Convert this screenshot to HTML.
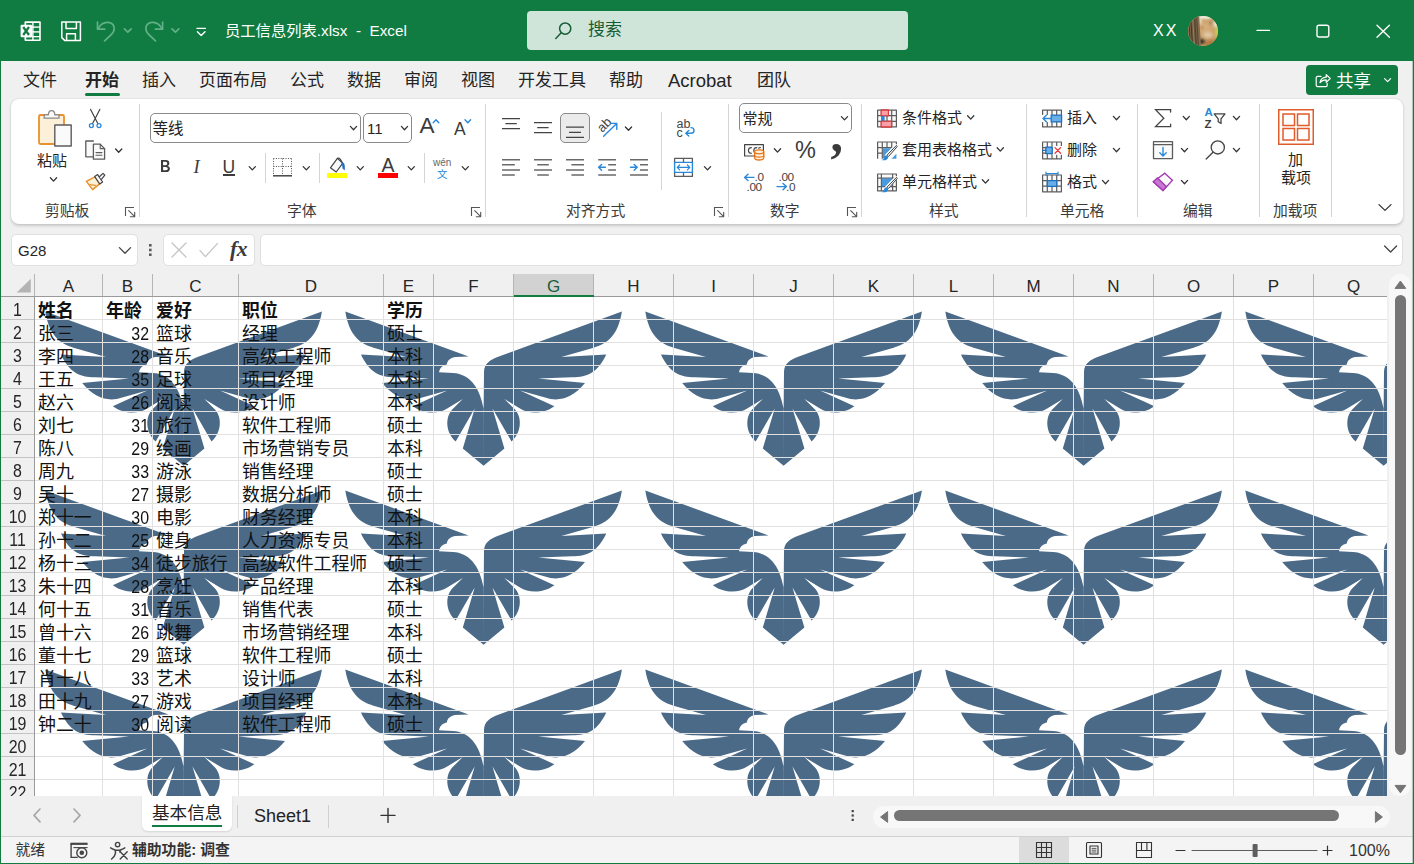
<!DOCTYPE html>
<html lang="zh-CN">
<head>
<meta charset="utf-8">
<title>员工信息列表.xlsx - Excel</title>
<style>
*{box-sizing:border-box;margin:0;padding:0}
html,body{width:1414px;height:864px;overflow:hidden;background:#f0f0f0}
body{position:relative;font-family:"Liberation Sans","Noto Sans CJK SC",sans-serif;color:#242424;-webkit-font-smoothing:antialiased}
.abs{position:absolute}
.t{position:absolute;white-space:nowrap;line-height:1}
svg{position:absolute;overflow:visible}
#titlebar{left:0;top:0;width:1414px;height:61px;background:#107c41}
.tab{position:absolute;top:72px;font-size:17px;line-height:18px;color:#242424;white-space:nowrap}
.rl{position:absolute;font-size:15px;line-height:16px;color:#242424;white-space:nowrap}
.gl{position:absolute;font-size:14.8px;line-height:16px;color:#3b3b3b;white-space:nowrap;top:203px}
.sep{position:absolute;width:1px;background:#d4d4d4;top:104px;height:113px}
.cell{position:absolute;font-size:17.9px;line-height:23px;height:23px;white-space:nowrap;color:#111;font-family:"Liberation Sans","Noto Sans CJK SC",sans-serif}
.num{font-size:18px;transform:scaleX(.885);transform-origin:100% 50%}
.rh{position:absolute;left:1px;width:33px;text-align:center;font-size:18px;line-height:23px;height:23px;color:#262626;transform:scaleX(.885)}
.ch{position:absolute;top:276px;text-align:center;font-size:17px;line-height:22px;height:22px;color:#262626}
</style>
</head>
<body>
<!-- ================= TITLE BAR ================= -->
<div id="titlebar" class="abs"></div>
<div class="t" style="left:225px;top:22px;font-size:15.3px;color:#fff;line-height:17px">员工信息列表.xlsx&nbsp; -&nbsp; Excel</div>
<div class="abs" style="left:527px;top:11px;width:381px;height:39px;border-radius:4px;background:#cfe5d9"></div>
<div class="t" style="left:588px;top:21px;font-size:17px;color:#185c37;line-height:18px">搜索</div>
<div class="t" style="left:1153px;top:22px;font-size:16px;color:#fff;line-height:17px;letter-spacing:2px">XX</div>
<!-- title bar icons -->
<svg class="abs" style="left:0;top:0" width="1414" height="61" viewBox="0 0 1414 61" fill="none">
 <!-- excel logo -->
 <g>
  <path d="M25.5 21.2h14.3a1 1 0 0 1 1 1v17.8a1 1 0 0 1-1 1H25.5a1 1 0 0 1-1-1V22.2a1 1 0 0 1 1-1z" fill="#fff"/>
  <g fill="#107c41">
   <rect x="26.2" y="23.0" width="6" height="3.4"/><rect x="33.6" y="23.0" width="5.6" height="3.4"/>
   <rect x="26.2" y="27.8" width="6" height="3.4"/><rect x="33.6" y="27.8" width="5.6" height="3.4"/>
   <rect x="26.2" y="32.6" width="6" height="3.4"/><rect x="33.6" y="32.6" width="5.6" height="3.4"/>
   <rect x="26.2" y="37.3" width="6" height="2.2"/><rect x="33.6" y="37.3" width="5.6" height="2.2"/>
  </g>
  <rect x="20.6" y="24.8" width="11.4" height="12.4" rx="1" fill="#fff"/>
  <path d="M23.200 27l5.800 8M29 27l-5.800 8" stroke="#107c41" stroke-width="2.200"/>
 </g>
 <!-- save -->
 <g stroke="#fff" stroke-width="1.5" stroke-linejoin="round">
  <path d="M61.8 22h18.6v18.4H64.6l-2.8-2.8z"/>
  <path d="M66 22v6.6h10.4V22"/>
  <path d="M66.6 40.4v-6.6h8.8v6.6"/>
 </g>
 <!-- undo (dim) -->
 <g stroke="#62b088" stroke-width="1.700" stroke-linecap="round" stroke-linejoin="round">
  <path d="M97.5 22v7.2h7.2"/>
  <path d="M97.8 29c2.4-4.4 6.4-7 10.4-6.6 3.6.4 6 3 6 6.4 0 2.6-1.4 4.4-3.4 6.2l-6.2 5.8"/>
  <path d="M124.4 28.8l3.4 3.4 3.4-3.4"/>
  <path d="M162.6 22v7.2h-7.2"/>
  <path d="M162.3 29c-2.4-4.4-6.4-7-10.4-6.6-3.6.4-6 3-6 6.4 0 2.6 1.4 4.4 3.4 6.2l6.2 5.8"/>
  <path d="M172 28.8l3.4 3.4 3.4-3.4"/>
 </g>
 <!-- qat customize -->
 <g stroke="#fff" stroke-width="1.4" stroke-linecap="round" stroke-linejoin="round">
  <path d="M197 28.4h8.4"/><path d="M197.4 31.8l3.8 3.8 3.8-3.8"/>
 </g>
 <!-- search icon -->
 <g stroke="#185c37" stroke-width="1.5" stroke-linecap="round">
  <circle cx="565.2" cy="28.6" r="5.6"/><path d="M561.2 32.8l-5.4 5.6"/>
 </g>
 <!-- window controls -->
 <g stroke="#fff" stroke-width="1.4" stroke-linecap="round">
  <path d="M1257 30.4h12.4"/>
  <rect x="1317" y="25.2" width="11.8" height="11.8" rx="2"/>
  <path d="M1377 25.2l12.4 12M1389.4 25.2l-12.4 12"/>
 </g>
</svg>
<!-- avatar -->
<div class="abs" style="left:1188.200px;top:15.800px;width:29.800px;height:30px;border-radius:50%;overflow:hidden;background:#cda777">
 <div class="abs" style="left:-1px;top:-1px;width:32px;height:32px;filter:blur(.8px);background:
  radial-gradient(ellipse 1px 1.500px at 23.400px 8.200px,#4a4640 0,rgba(74,70,64,.8) 60%,transparent 100%),
  radial-gradient(ellipse 2px 1.100px at 15px 12.800px,rgba(154,74,56,.85) 0,rgba(154,74,56,.5) 50%,transparent 100%),
  radial-gradient(ellipse 4.500px 3.400px at 14.500px 26.500px,#2a2a24 0,rgba(50,46,36,.85) 55%,transparent 100%),
  radial-gradient(ellipse 8px 5px at 24px 29px,#b4733c 0,#b97c45 60%,transparent 100%),
  radial-gradient(ellipse 7px 4.500px at 21px 20px,#e4cfb0 0,rgba(222,197,160,.8) 55%,transparent 100%),
  radial-gradient(ellipse 3.400px 7.500px at 30.500px 17.500px,#cfcf4e 0,#c9c655 55%,transparent 100%),
  radial-gradient(ellipse 11px 3.200px at 19px 1.400px,#f6f6ee 0,#eeeede 60%,transparent 100%),
  radial-gradient(ellipse 4px 6px at 29.500px 8.500px,#ecede0 0,#e2e3cc 50%,transparent 100%),
  radial-gradient(ellipse 3px 5px at 13px 6px,#e8e6c8 0,rgba(232,230,200,.6) 50%,transparent 100%),
  radial-gradient(circle 12px at 18.500px 13px,#d8af7e 0,#d0a673 50%,#c49762 100%)"></div>
 <div class="abs" style="left:-3px;top:-2px;width:13.500px;height:36px;filter:blur(.6px);transform:rotate(-3.500deg);transform-origin:100% 0;background:repeating-linear-gradient(90deg,#43362a 0,#7a6446 1.300px,#9a8460 2.100px,#6b573c 2.900px,#3b2f24 3.700px,#8a7350 4.700px,#4d3e2e 5.500px)"></div>
</div>
<!-- ================= TAB ROW ================= -->
<div class="tab" style="left:23px">文件</div>
<div class="tab" style="left:85px;font-weight:700">开始</div>
<div class="abs" style="left:85px;top:93px;width:35px;height:3px;background:#107c41;border-radius:1.5px"></div>
<div class="tab" style="left:142px">插入</div>
<div class="tab" style="left:199px">页面布局</div>
<div class="tab" style="left:290px">公式</div>
<div class="tab" style="left:347px">数据</div>
<div class="tab" style="left:404px">审阅</div>
<div class="tab" style="left:461px">视图</div>
<div class="tab" style="left:518px">开发工具</div>
<div class="tab" style="left:609px">帮助</div>
<div class="tab" style="left:668px;font-size:18.5px">Acrobat</div>
<div class="tab" style="left:757px">团队</div>
<!-- share -->
<div class="abs" style="left:1306px;top:65px;width:92px;height:30px;border-radius:4px;background:#107c41"></div>
<div class="t" style="left:1336px;top:72px;font-size:17.5px;line-height:18px;color:#fff">共享</div>
<svg class="abs" style="left:1306px;top:65px" width="92" height="30" viewBox="0 0 92 30" fill="none" stroke="#fff" stroke-width="1.2" stroke-linecap="round" stroke-linejoin="round">
 <path d="M15 11.4h-3.4a1.4 1.4 0 0 0-1.4 1.4v7.4a1.4 1.4 0 0 0 1.4 1.4h8.2a1.4 1.4 0 0 0 1.4-1.4v-1.8"/>
 <path d="M14 17.6c.6-3.4 2.8-5.2 6.2-5.4v-2.6l4 3.9-4 3.9v-2.6c-2.6-.1-4.6.7-6.2 2.8z"/>
 <path d="M78.6 13.6l3 3 3-3"/>
</svg>
<!-- ================= RIBBON ================= -->
<div class="abs" style="left:11px;top:99px;width:1392px;height:125px;border-radius:8px;background:#fff;box-shadow:0 1.5px 3px rgba(0,0,0,.16),0 0 1.5px rgba(0,0,0,.12)"></div>
<!-- group separators -->
<div class="sep" style="left:139px"></div>
<div class="sep" style="left:485px"></div>
<div class="sep" style="left:728px"></div>
<div class="sep" style="left:861px"></div>
<div class="sep" style="left:1026px"></div>
<div class="sep" style="left:1137px"></div>
<div class="sep" style="left:1259px"></div>
<div class="sep" style="left:1331px"></div>
<!-- inner separators -->
<div class="sep" style="left:265px;top:153px;height:30px"></div>
<div class="sep" style="left:319px;top:153px;height:30px"></div>
<div class="sep" style="left:424px;top:153px;height:30px"></div>
<div class="sep" style="left:661px;top:112px;height:78px"></div>
<!-- group labels -->
<div class="gl" style="left:45px">剪贴板</div>
<div class="gl" style="left:287px">字体</div>
<div class="gl" style="left:566px">对齐方式</div>
<div class="gl" style="left:770px">数字</div>
<div class="gl" style="left:929px">样式</div>
<div class="gl" style="left:1060px">单元格</div>
<div class="gl" style="left:1183px">编辑</div>
<div class="gl" style="left:1273px">加载项</div>
<!-- clipboard -->
<div class="rl" style="left:37px;top:153px">粘贴</div>
<!-- font group -->
<div class="abs" style="left:150px;top:113px;width:211px;height:30px;border:1px solid #8a8a8a;border-radius:5px;background:#fff"></div>
<div class="abs" style="left:363px;top:113px;width:49px;height:30px;border:1px solid #8a8a8a;border-radius:5px;background:#fff"></div>
<div class="rl" style="left:152.500px;top:121px;font-size:15.5px">等线</div>
<div class="rl" style="left:367px;top:121px;font-size:15px">11</div>
<div class="t" style="left:419.500px;top:114px;font-size:22.5px;line-height:24px;color:#3b3b3b">A</div>
<div class="t" style="left:454px;top:118.500px;font-size:17.5px;line-height:20px;color:#3b3b3b">A</div>
<div class="t" style="left:160px;top:156.500px;font-size:17px;line-height:20px;font-weight:700;color:#3b3b3b;transform:scaleX(.86);transform-origin:0 50%">B</div>
<div class="t" style="left:193.500px;top:157px;font-size:18.5px;line-height:20px;font-style:italic;font-family:'Liberation Serif',serif;color:#3b3b3b">I</div>
<div class="t" style="left:222.500px;top:156.500px;font-size:17.5px;line-height:20px;color:#3b3b3b">U</div>
<div class="abs" style="left:222.500px;top:174px;width:12px;height:1.500px;background:#3b3b3b"></div>
<div class="abs" style="left:327px;top:173px;width:20px;height:5px;background:#ffff00"></div>
<div class="abs" style="left:378px;top:173px;width:20px;height:5px;background:#ff0000"></div>
<div class="t" style="left:381.500px;top:154px;font-size:19.5px;line-height:22px;color:#3b3b3b">A</div>
<div class="t" style="left:433px;top:157px;font-size:10px;line-height:12px;color:#666">wén</div>
<div class="t" style="left:437px;top:167.500px;font-size:10.5px;line-height:12px;color:#2b88d8">文</div>
<!-- alignment group -->
<div class="abs" style="left:560px;top:113px;width:30px;height:30px;border:1px solid #8a8a8a;border-radius:5px;background:#ebebeb"></div>
<div class="t" style="left:676.500px;top:117.500px;font-size:12.5px;line-height:12px;color:#444">ab</div>
<div class="t" style="left:676.500px;top:126.500px;font-size:12.5px;line-height:12px;color:#444">c</div>
<div class="t" style="left:596.500px;top:118.500px;width:15px;text-align:center;font-size:13px;line-height:12px;color:#444;transform:rotate(-45deg);transform-origin:50% 50%">ab</div>
<!-- number group -->
<div class="abs" style="left:739px;top:103px;width:113px;height:30px;border:1px solid #8a8a8a;border-radius:5px;background:#fff"></div>
<div class="rl" style="left:742.500px;top:111px">常规</div>
<div class="t" style="left:795px;top:138px;font-size:23.5px;line-height:24px;color:#3b3b3b">%</div>
<div class="t" style="left:830.500px;top:109px;font-size:50px;line-height:50px;color:#3b3b3b;font-family:'Liberation Serif',serif;font-weight:700">,</div>
<div class="t" style="left:754.500px;top:171.500px;font-size:11.8px;line-height:10px;color:#444;letter-spacing:-.4px">.0</div>
<div class="t" style="left:746.500px;top:182px;font-size:11.8px;line-height:10px;color:#444;letter-spacing:-.4px">.00</div>
<div class="t" style="left:778.500px;top:171.500px;font-size:11.8px;line-height:10px;color:#444;letter-spacing:-.4px">.00</div>
<div class="t" style="left:786px;top:182px;font-size:11.8px;line-height:10px;color:#444;letter-spacing:-.4px">.0</div>
<!-- styles group -->
<div class="rl" style="left:902px;top:110px">条件格式</div>
<div class="rl" style="left:902px;top:142px">套用表格格式</div>
<div class="rl" style="left:902px;top:174px">单元格样式</div>
<!-- cells group -->
<div class="rl" style="left:1067px;top:110px">插入</div>
<div class="rl" style="left:1067px;top:142px">删除</div>
<div class="rl" style="left:1067px;top:174px">格式</div>
<!-- editing -->
<div class="t" style="left:1204.500px;top:106px;font-size:11.5px;line-height:12px;color:#2b88d8;font-weight:700">A</div>
<div class="t" style="left:1204.500px;top:117.500px;font-size:11.5px;line-height:12px;color:#3b3b3b;font-weight:700">Z</div>
<!-- addins -->
<div class="rl" style="left:1288px;top:151.500px">加</div>
<div class="rl" style="left:1281px;top:169.500px">载项</div>
<!-- ribbon icons -->
<svg class="abs" style="left:0;top:98px" width="1414" height="126" viewBox="0 98 1414 126" fill="none" stroke-linecap="round" stroke-linejoin="round">
<defs>
 <path id="chv" d="M.4 0l3.100 3.300 3.100-3.300" stroke="#333" stroke-width="1.300" fill="none"/>
 <g id="lnch" stroke="#555" stroke-width="1.100" fill="none"><path d="M0 8.500V0h8.500" stroke-linecap="butt" stroke-linejoin="miter"/><path d="M3.200 3.200l6 6M9.200 4.800v4.400h-4.400"/></g>
</defs>
<!-- paste -->
<rect x="39" y="115" width="25" height="29" rx="1.500" fill="#fdf0d8" stroke="#e8912d" stroke-width="1.800"/>
<path d="M44.200 118.200v-3.400h4.200c0-2.600 1.400-4.200 3.200-4.200s3.200 1.600 3.200 4.200h4.200v3.400z" fill="#fafafa" stroke="#8a8886" stroke-width="1.300"/>
<rect x="54.800" y="125" width="16.400" height="21" fill="#fafafa" stroke="#5c5c5c" stroke-width="1.400"/>
<use href="#chv" x="50" y="177.800"/>
<!-- cut -->
<path d="M90.600 109.400l7.200 14.200M99.800 109.400l-7.200 14.200" stroke="#444" stroke-width="1.200"/>
<circle cx="91.400" cy="125.600" r="2" stroke="#2b88d8" stroke-width="1.300"/><circle cx="99" cy="125.600" r="2" stroke="#2b88d8" stroke-width="1.300"/>
<!-- copy -->
<path d="M93.400 141h-7.600v15.800h7.600" stroke="#5c5c5c" stroke-width="1.300" fill="#fafafa"/>
<path d="M93.400 144.200h6.800l4.400 4.400v10.600h-11.200z" fill="#fafafa" stroke="#5c5c5c" stroke-width="1.300"/>
<path d="M100.200 144.200v4.400h4.400M96 152.600h6M96 155.200h6" stroke="#5c5c5c" stroke-width="1.100"/>
<use href="#chv" x="115.200" y="149"/>
<!-- format painter -->
<path d="M86.400 181.400l8.600-4.600 4.600 7-7 5.800z" fill="#fdf0d8" stroke="#e8912d" stroke-width="1.500"/>
<path d="M89.800 184.600l5.600 0.800" stroke="#e8912d" stroke-width="1.100"/>
<path d="M94.600 176.400l3-1.800 5 7.400-2.800 2z" fill="#fafafa" stroke="#444" stroke-width="1.200"/>
<path d="M99.400 176.800l3.600-3.400 1.800 1.800-3.200 4" stroke="#444" stroke-width="1.200" fill="#fafafa"/>
<use href="#lnch" x="125.500" y="207.500"/>
<!-- font group chevrons -->
<use href="#chv" x="350" y="126.400"/>
<use href="#chv" x="401" y="126.400"/>
<path d="M433.200 122.800l2.800-3 2.800 3" stroke="#2b88d8" stroke-width="1.400"/>
<path d="M465 119.800l2.800 3 2.800-3" stroke="#2b88d8" stroke-width="1.400"/>
<use href="#chv" x="248.800" y="166.600"/>
<!-- borders icon -->
<g stroke="#555" stroke-width="1" stroke-dasharray="1 1.400" stroke-linecap="butt"><path d="M273.500 158.500h18M273.500 166.500h18M273.500 158.500v17M282.500 158.500v17M291.500 158.500v17"/></g>
<path d="M273 175.800h19" stroke="#444" stroke-width="1.500" stroke-linecap="butt"/>
<use href="#chv" x="302.800" y="166.600"/>
<!-- fill bucket -->
<path d="M337.400 158.400l-7 9.400 5.800 4.200 6.600-8.800z" stroke="#444" stroke-width="1.200" fill="#fafafa"/>
<path d="M337.400 158.400c1.200-.6 2.400-.2 3 1l2.400 4.200" stroke="#444" stroke-width="1.200"/>
<path d="M341.800 162c1.800.6 2.800 2.400 2.800 5.200v2.600c-1.400-.4-2-1.400-2-3z" fill="#1e6fbf" stroke="#1e6fbf" stroke-width=".6"/>
<use href="#chv" x="356.800" y="166.600"/>
<use href="#chv" x="407.800" y="166.600"/>
<use href="#chv" x="461.800" y="166.600"/>
<use href="#lnch" x="471.500" y="207.500"/>
<!-- alignment row 1 -->
<g stroke="#444" stroke-width="1.250" stroke-linecap="butt">
 <path d="M502 118.500h18M505.400 123.600h11.400M502 128.700h18"/>
 <path d="M534 122.500h18M537.200 127.500h11.400M534 132.600h18"/>
 <path d="M566 127.200h18M569 132.300h12M566 137.400h18"/>
</g>
<path d="M603.600 136.200l12.800-12.400M610.800 123.400h6v6" stroke="#2b88d8" stroke-width="1.400"/>
<use href="#chv" x="625" y="127"/>
<!-- alignment row 2 -->
<g stroke="#6a6a6a" stroke-width="1.500" stroke-linecap="butt">
 <path d="M502 159.700h18M502 164.800h12.800M502 169.900h18M502 175h12.800"/>
 <path d="M534 159.700h18M537.200 164.800h11.600M534 169.900h18M537.200 175h11.600"/>
 <path d="M566 159.700h18M571.400 164.800h12.600M566 169.900h18M571.400 175h12.600"/>
 <path d="M598.200 159.700h17.800M608.200 164.800h7.800M608.200 169.900h7.800M598.200 175h17.800"/>
 <path d="M630 159.700h18M640 164.800h8M640 169.900h8M630 175h18"/>
</g>
<g stroke="#2b88d8" stroke-width="1.400"><path d="M605.400 167.300h-6.600M601.600 164.400l-3 2.900 3 2.900"/><path d="M630.400 167.300h6.600M634.200 164.400l3 2.900-3 2.900"/></g>
<!-- wrap arrow -->
<path d="M686.200 133.200h4.600c2 0 3.200-1.200 3.200-2.800s-1.200-2.800-3-2.800M688.800 130.400l-3 2.800 3 2.800" stroke="#2b88d8" stroke-width="1.400"/>
<!-- merge -->
<g stroke="#5c5c5c" stroke-width="1.300" stroke-linecap="butt"><path d="M674.600 162.400v-4h17.800v4M674.600 172.400v4h17.800v-4M683.500 158.400v4M683.500 172.400v4"/></g>
<rect x="674.600" y="162.400" width="17.800" height="10" stroke="#2b88d8" stroke-width="1.400" fill="#fff"/>
<path d="M677.400 167.400h12.200M679.600 165l-2.400 2.400 2.400 2.400M687.400 165l2.400 2.400-2.400 2.400" stroke="#2b88d8" stroke-width="1.200"/>
<use href="#chv" x="704" y="166.600"/>
<use href="#lnch" x="714.500" y="207.500"/>
<!-- number -->
<use href="#chv" x="841" y="116.600"/>
<rect x="744.600" y="144.600" width="18.800" height="11.400" stroke="#444" stroke-width="1.200" fill="#fafafa"/>
<path d="M751.400 147.600c-2 0-3 1.200-3 2.800s1 2.800 3 2.800M756.800 147.600c-2 0-3 1.200-3 2.800s1 2.800 3 2.800M760.400 147.600c-.8 0-1.400.2-1.800.6" stroke="#444" stroke-width="1.100"/>
<path d="M754.600 151.800v6c0 1.200 2 2.200 4.600 2.200s4.600-1 4.600-2.200v-6" fill="#fdf0d8" stroke="#e8731a" stroke-width="1.300"/>
<ellipse cx="759.200" cy="151.800" rx="4.600" ry="2" fill="#fdf0d8" stroke="#e8731a" stroke-width="1.300"/>
<path d="M754.600 155c0 1.200 2 2.100 4.600 2.100s4.600-.9 4.600-2.100" stroke="#e8731a" stroke-width="1.200"/>
<use href="#chv" x="774" y="148.800"/>
<g stroke="#2b88d8" stroke-width="1.400"><path d="M754 177.400h-9M748 174.200l-3.400 3.200 3.400 3.200"/><path d="M777 186.600h9M783 183.400l3.400 3.200-3.400 3.200"/></g>
<use href="#lnch" x="847.500" y="207.500"/>
</svg>
<svg class="abs" style="left:0;top:98px" width="1414" height="126" viewBox="0 98 1414 126" fill="none" stroke-linecap="round" stroke-linejoin="round">
<defs>
 <path id="chv2" d="M.4 0l3.100 3.300 3.100-3.300" stroke="#333" stroke-width="1.300" fill="none"/>
 <g id="grid3" stroke="#5c5c5c" stroke-width="1.200" stroke-linecap="butt"><path d="M.6 .6h18.800v16.800H.6zM.6 6.200h18.800M.6 11.800h18.800M5.300 .6v16.800M10 .6v16.800M14.700 .6v16.800" fill="none"/></g>
</defs>
<!-- conditional formatting -->
<g transform="translate(877 109.500)"><rect x=".6" y=".6" width="18.800" height="16.800" fill="#fafafa"/>
 <rect x="4.200" y=".6" width="7.200" height="5.600" fill="#f8a0a6" stroke="#e03a3e" stroke-width="1.100"/>
 <rect x="4.200" y="6.200" width="3" height="5.600" fill="#2b88d8"/>
 <rect x="4.200" y="11.800" width="10.400" height="5.600" fill="#f8a0a6" stroke="#e03a3e" stroke-width="1.100"/>
 <use href="#grid3"/>
 <rect x="4.200" y=".6" width="7.200" height="5.600" fill="#f8a0a6" stroke="#e03a3e" stroke-width="1.100"/>
 <rect x="4.700" y="6.600" width="2.800" height="4.800" fill="#2b88d8"/>
 <rect x="4.200" y="11.800" width="10.400" height="5.600" fill="#f8a0a6" stroke="#e03a3e" stroke-width="1.100"/>
</g>
<use href="#chv2" x="967.200" y="115.800"/>
<!-- format as table -->
<g transform="translate(877 141.400)"><rect x=".6" y=".6" width="18.800" height="16.800" fill="#fafafa"/>
 <g stroke="#5c5c5c" stroke-width="1.200" stroke-linecap="butt"><path d="M.6 17.400V.6h18.800v5.600M.6 6.200h18.800M.6 11.800h5M5.300 .6v16.800M10 .6v5.600M14.700 .6v5.600"/></g>
 <path d="M6 6.800h11l-8 10h-3zM19.400 12.400v5h-4.800z" fill="#2b88d8" opacity=".85"/>
 <path d="M19 4.600l-9.400 9.800" stroke="#fff" stroke-width="3.600"/>
 <path d="M19.200 4.200l-9 9.400 1.400 1.400 8.400-9.600z" fill="#fafafa" stroke="#444" stroke-width="1"/>
 <path d="M9.800 13.800c-2 .2-2.600 1.600-3 3-.3 1-1.200 1.500-2.400 1.700 2.600.9 5.200.4 6.400-1.500.6-1 .4-2.200-1-3.200z" fill="#2b88d8"/>
</g>
<use href="#chv2" x="996.800" y="147.800"/>
<!-- cell styles -->
<g transform="translate(877 173.400)"><rect x=".6" y=".6" width="18.800" height="16.800" fill="#fafafa"/>
 <g stroke="#5c5c5c" stroke-width="1.200" stroke-linecap="butt"><path d="M.6 .6h18.800v16.800H.6zM.6 4.800h18.800M.6 13.200h18.800M4.400 .6v16.800M15.600 .6v16.800"/></g>
 <path d="M4.600 5h10.800v5l-5 3h-5.800z" fill="#2b88d8" opacity=".85"/>
 <path d="M19 4.600l-9.400 9.800" stroke="#fff" stroke-width="3.600"/>
 <path d="M19.200 4.200l-9 9.400 1.400 1.400 8.400-9.600z" fill="#fafafa" stroke="#444" stroke-width="1"/>
 <path d="M9.800 13.800c-2 .2-2.600 1.600-3 3-.3 1-1.200 1.500-2.400 1.700 2.600.9 5.200.4 6.400-1.500.6-1 .4-2.200-1-3.200z" fill="#2b88d8"/>
</g>
<use href="#chv2" x="982" y="179.800"/>
<!-- insert -->
<g transform="translate(1042 109.500)"><rect x=".6" y=".6" width="18.800" height="16.800" fill="#fafafa"/><use href="#grid3"/>
 <rect x="0" y="5.400" width="11" height="7.200" fill="#fff"/>
 <rect x="9.200" y="5.600" width="10.400" height="6.800" fill="#6aaee8" stroke="#1e6fbf" stroke-width="1.300"/>
 <path d="M9 9H1M4.400 5.800L1 9l3.400 3.200" stroke="#2b88d8" stroke-width="1.400"/>
</g>
<use href="#chv2" x="1113" y="116.400"/>
<!-- delete -->
<g transform="translate(1042 141.400)"><rect x=".6" y=".6" width="18.800" height="16.800" fill="#fafafa"/><use href="#grid3"/>
 <rect x="10.600" y="4.600" width="9.600" height="8.800" fill="#fff"/>
 <rect x="3.800" y="5.800" width="6.400" height="6.400" fill="#6aaee8" stroke="#1e6fbf" stroke-width="1.300"/>
 <path d="M.6 9h3.200" stroke="#1e6fbf" stroke-width="1.300"/>
 <path d="M13 6.200l5.600 5.600M18.600 6.200L13 11.800" stroke="#e8383d" stroke-width="1.300"/>
</g>
<use href="#chv2" x="1113" y="148.400"/>
<!-- format -->
<g transform="translate(1042 174.400)"><rect x=".6" y=".6" width="18.800" height="16.800" fill="#fafafa"/><use href="#grid3"/>
 <rect x="5.300" y="6.200" width="9.400" height="5.800" fill="#6aaee8" stroke="#1e6fbf" stroke-width="1.300"/>
 <path d="M4 -.8h12M4 -2.300v3M16 -2.300v3" stroke="#2b88d8" stroke-width="1.200"/>
</g>
<use href="#chv2" x="1102" y="180.400"/>
<!-- editing: sigma -->
<path d="M1170.600 112v-2.400h-15l8.200 8.600-8.200 8.400h15v-2.400" stroke="#444" stroke-width="1.300" stroke-linejoin="miter"/>
<use href="#chv2" x="1182.800" y="116.400"/>
<!-- sort filter funnel -->
<path d="M1214.200 113.800h10.800l-4 5v4.600l-2.800-1.600v-3z" stroke="#444" stroke-width="1.300" fill="#fafafa"/>
<use href="#chv2" x="1233" y="116.400"/>
<!-- fill down -->
<rect x="1153.500" y="141.600" width="19" height="17" stroke="#5c5c5c" stroke-width="1.300" fill="#fafafa"/>
<path d="M1153.500 144.600h19" stroke="#5c5c5c" stroke-width="1.300"/>
<path d="M1163 147.400v8.400M1159.800 152.800l3.200 3.200 3.200-3.200" stroke="#2b88d8" stroke-width="1.400"/>
<use href="#chv2" x="1181" y="148.400"/>
<!-- find -->
<circle cx="1217.800" cy="147.400" r="6.600" stroke="#444" stroke-width="1.300" fill="#fafafa"/>
<path d="M1213 152.200l-6.800 6.800" stroke="#444" stroke-width="1.300"/>
<use href="#chv2" x="1233" y="148.400"/>
<!-- eraser -->
<path d="M1164.800 173.200l7.600 7-9.400 10.400-9.600-8.800z" fill="#fafafa" stroke="#a33bb3" stroke-width="1.400" stroke-linejoin="miter"/>
<path d="M1153.400 181.800l4-3.800 9 8.600-3.400 4z" fill="#c878d2" stroke="#a33bb3" stroke-width="1.400" stroke-linejoin="miter"/>
<use href="#chv2" x="1181" y="180.400"/>
<!-- add-ins -->
<g stroke="#e05c2b" stroke-width="1.500" stroke-linejoin="miter" stroke-linecap="butt">
 <rect x="1278.750" y="109.750" width="34.500" height="34.500"/>
 <rect x="1283" y="114" width="11.500" height="11.500"/><rect x="1297.500" y="114" width="11.500" height="11.500"/>
 <rect x="1283" y="128.500" width="11.500" height="11.500"/><rect x="1297.500" y="128.500" width="11.500" height="11.500"/>
</g>
<!-- collapse -->
<path d="M1379 204.600l6 5.800 6-5.800" stroke="#333" stroke-width="1.300"/>
</svg>
<!-- ================= FORMULA BAR ================= -->
<div class="abs" style="left:11px;top:234px;width:127px;height:32px;border:1px solid #e0e0e0;border-radius:5px;background:#fff"></div>
<div class="t" style="left:18px;top:242px;font-size:15px;line-height:17px;color:#262626">G28</div>
<div class="abs" style="left:163px;top:234px;width:92px;height:32px;border:1px solid #e0e0e0;border-radius:5px;background:#fff"></div>
<div class="abs" style="left:260px;top:234px;width:1143px;height:32px;border:1px solid #e0e0e0;border-radius:5px;background:#fff"></div>
<div class="t" style="left:230px;top:238px;font-size:21.5px;line-height:22px;color:#3a3a3a;font-family:'Liberation Serif',serif;font-style:italic;font-weight:700;letter-spacing:-.5px">fx</div>
<svg class="abs" style="left:0;top:230px" width="1414" height="40" viewBox="0 0 1414 40" fill="none" stroke-linecap="round" stroke-linejoin="round">
 <path d="M119.4 17.6l5.6 5.6 5.6-5.6" stroke="#444" stroke-width="1.3"/>
 <g fill="#5c5c5c" stroke="none"><rect x="149" y="14" width="2.6" height="2.6"/><rect x="149" y="18.7" width="2.6" height="2.6"/><rect x="149" y="23.4" width="2.6" height="2.6"/></g>
 <path d="M172 13l14 14M186 13l-14 14" stroke="#c4c4c4" stroke-width="1.3"/>
 <path d="M200 20.6l5.4 6 12-13" stroke="#c4c4c4" stroke-width="1.3"/>
 <path d="M1384.6 16l6 6 6-6" stroke="#444" stroke-width="1.3"/>
</svg>
<!-- ================= GRID ================= -->
<div class="abs" style="left:35px;top:297px;width:1352px;height:499px;background:#fff;overflow:hidden">
<svg style="left:0;top:0" width="1352" height="499" viewBox="0 0 1352 499">
<defs><pattern id="eg" x="0" y="0" width="300" height="179" patternUnits="userSpaceOnUse"><path fill="#4b6a88" d="M148.60 168.70L169.40 151.50L157.50 111.50L176.50 144.50C187.00 135.00 187.00 120.00 180.00 112.50L169.40 102.00L185.00 111.50C193.00 116.50 207.00 118.00 219.40 109.25L185.00 93.60L210.00 100.50C223.00 105.00 237.00 102.00 250.00 86.10L203.10 81.50L237.00 80.30C253.00 80.00 263.00 75.00 271.25 57.40L226.30 60.00L258.70 50.70C272.00 47.00 283.00 39.00 286.90 14.60L162.50 59.90C156.00 62.50 149.00 66.00 149.00 75.00L148.60 115.00ZM148.60 168.70L127.80 151.50L139.70 111.50L120.70 144.50C110.20 135.00 110.20 120.00 117.20 112.50L127.80 102.00L112.20 111.50C104.20 116.50 90.20 118.00 77.80 109.25L112.20 93.60L87.20 100.50C74.20 105.00 60.20 102.00 47.20 86.10L94.10 81.50L60.20 80.30C44.20 80.00 34.20 75.00 25.95 57.40L70.90 60.00L38.50 50.70C25.20 47.00 14.20 39.00 10.30 14.60L133.60 59.50L120.00 60.00C115.00 61.00 112.00 64.00 111.90 67.50C109.00 68.00 105.00 70.00 104.00 75.20L118.00 76.00C133.50 77.00 144.50 88.00 148.90 113.00Z"/><path d="M148.600 113.500V168" stroke="#4b6a88" stroke-width=".7" fill="none"/></pattern></defs>
<rect x="0" y="0" width="1352" height="499" fill="url(#eg)"/>
<path d="M67.5 0V499M117.5 0V499M203.5 0V499M348.5 0V499M398.5 0V499M478.5 0V499M558.5 0V499M638.5 0V499M718.5 0V499M798.5 0V499M878.5 0V499M958.5 0V499M1038.5 0V499M1118.5 0V499M1198.5 0V499M1278.5 0V499M0 22.5H1352M0 45.5H1352M0 68.5H1352M0 91.5H1352M0 114.5H1352M0 137.5H1352M0 160.5H1352M0 183.5H1352M0 206.5H1352M0 229.5H1352M0 252.5H1352M0 275.5H1352M0 298.5H1352M0 321.5H1352M0 344.5H1352M0 367.5H1352M0 390.5H1352M0 413.5H1352M0 436.5H1352M0 459.5H1352M0 482.5H1352" stroke="#e1e1e1" stroke-width="1" fill="none"/>
</svg>
<div class="cell" style="left:3px;top:2.5px;font-weight:700">姓名</div>
<div class="cell" style="left:71px;top:2.5px;font-weight:700">年龄</div>
<div class="cell" style="left:121px;top:2.5px;font-weight:700">爱好</div>
<div class="cell" style="left:207px;top:2.5px;font-weight:700">职位</div>
<div class="cell" style="left:352px;top:2.5px;font-weight:700">学历</div>
<div class="cell" style="left:3px;top:25.5px">张三</div>
<div class="cell num" style="right:1238px;top:25.5px">32</div>
<div class="cell" style="left:121px;top:25.5px">篮球</div>
<div class="cell" style="left:207px;top:25.5px">经理</div>
<div class="cell" style="left:352px;top:25.5px">硕士</div>
<div class="cell" style="left:3px;top:48.5px">李四</div>
<div class="cell num" style="right:1238px;top:48.5px">28</div>
<div class="cell" style="left:121px;top:48.5px">音乐</div>
<div class="cell" style="left:207px;top:48.5px">高级工程师</div>
<div class="cell" style="left:352px;top:48.5px">本科</div>
<div class="cell" style="left:3px;top:71.5px">王五</div>
<div class="cell num" style="right:1238px;top:71.5px">35</div>
<div class="cell" style="left:121px;top:71.5px">足球</div>
<div class="cell" style="left:207px;top:71.5px">项目经理</div>
<div class="cell" style="left:352px;top:71.5px">本科</div>
<div class="cell" style="left:3px;top:94.5px">赵六</div>
<div class="cell num" style="right:1238px;top:94.5px">26</div>
<div class="cell" style="left:121px;top:94.5px">阅读</div>
<div class="cell" style="left:207px;top:94.5px">设计师</div>
<div class="cell" style="left:352px;top:94.5px">本科</div>
<div class="cell" style="left:3px;top:117.5px">刘七</div>
<div class="cell num" style="right:1238px;top:117.5px">31</div>
<div class="cell" style="left:121px;top:117.5px">旅行</div>
<div class="cell" style="left:207px;top:117.5px">软件工程师</div>
<div class="cell" style="left:352px;top:117.5px">硕士</div>
<div class="cell" style="left:3px;top:140.5px">陈八</div>
<div class="cell num" style="right:1238px;top:140.5px">29</div>
<div class="cell" style="left:121px;top:140.5px">绘画</div>
<div class="cell" style="left:207px;top:140.5px">市场营销专员</div>
<div class="cell" style="left:352px;top:140.5px">本科</div>
<div class="cell" style="left:3px;top:163.5px">周九</div>
<div class="cell num" style="right:1238px;top:163.5px">33</div>
<div class="cell" style="left:121px;top:163.5px">游泳</div>
<div class="cell" style="left:207px;top:163.5px">销售经理</div>
<div class="cell" style="left:352px;top:163.5px">硕士</div>
<div class="cell" style="left:3px;top:186.5px">吴十</div>
<div class="cell num" style="right:1238px;top:186.5px">27</div>
<div class="cell" style="left:121px;top:186.5px">摄影</div>
<div class="cell" style="left:207px;top:186.5px">数据分析师</div>
<div class="cell" style="left:352px;top:186.5px">硕士</div>
<div class="cell" style="left:3px;top:209.5px">郑十一</div>
<div class="cell num" style="right:1238px;top:209.5px">30</div>
<div class="cell" style="left:121px;top:209.5px">电影</div>
<div class="cell" style="left:207px;top:209.5px">财务经理</div>
<div class="cell" style="left:352px;top:209.5px">本科</div>
<div class="cell" style="left:3px;top:232.5px">孙十二</div>
<div class="cell num" style="right:1238px;top:232.5px">25</div>
<div class="cell" style="left:121px;top:232.5px">健身</div>
<div class="cell" style="left:207px;top:232.5px">人力资源专员</div>
<div class="cell" style="left:352px;top:232.5px">本科</div>
<div class="cell" style="left:3px;top:255.5px">杨十三</div>
<div class="cell num" style="right:1238px;top:255.5px">34</div>
<div class="cell" style="left:121px;top:255.5px">徒步旅行</div>
<div class="cell" style="left:207px;top:255.5px">高级软件工程师</div>
<div class="cell" style="left:352px;top:255.5px">硕士</div>
<div class="cell" style="left:3px;top:278.5px">朱十四</div>
<div class="cell num" style="right:1238px;top:278.5px">28</div>
<div class="cell" style="left:121px;top:278.5px">烹饪</div>
<div class="cell" style="left:207px;top:278.5px">产品经理</div>
<div class="cell" style="left:352px;top:278.5px">本科</div>
<div class="cell" style="left:3px;top:301.5px">何十五</div>
<div class="cell num" style="right:1238px;top:301.5px">31</div>
<div class="cell" style="left:121px;top:301.5px">音乐</div>
<div class="cell" style="left:207px;top:301.5px">销售代表</div>
<div class="cell" style="left:352px;top:301.5px">硕士</div>
<div class="cell" style="left:3px;top:324.5px">曾十六</div>
<div class="cell num" style="right:1238px;top:324.5px">26</div>
<div class="cell" style="left:121px;top:324.5px">跳舞</div>
<div class="cell" style="left:207px;top:324.5px">市场营销经理</div>
<div class="cell" style="left:352px;top:324.5px">本科</div>
<div class="cell" style="left:3px;top:347.5px">董十七</div>
<div class="cell num" style="right:1238px;top:347.5px">29</div>
<div class="cell" style="left:121px;top:347.5px">篮球</div>
<div class="cell" style="left:207px;top:347.5px">软件工程师</div>
<div class="cell" style="left:352px;top:347.5px">硕士</div>
<div class="cell" style="left:3px;top:370.5px">肖十八</div>
<div class="cell num" style="right:1238px;top:370.5px">33</div>
<div class="cell" style="left:121px;top:370.5px">艺术</div>
<div class="cell" style="left:207px;top:370.5px">设计师</div>
<div class="cell" style="left:352px;top:370.5px">本科</div>
<div class="cell" style="left:3px;top:393.5px">田十九</div>
<div class="cell num" style="right:1238px;top:393.5px">27</div>
<div class="cell" style="left:121px;top:393.5px">游戏</div>
<div class="cell" style="left:207px;top:393.5px">项目经理</div>
<div class="cell" style="left:352px;top:393.5px">本科</div>
<div class="cell" style="left:3px;top:416.5px">钟二十</div>
<div class="cell num" style="right:1238px;top:416.5px">30</div>
<div class="cell" style="left:121px;top:416.5px">阅读</div>
<div class="cell" style="left:207px;top:416.5px">软件工程师</div>
<div class="cell" style="left:352px;top:416.5px">硕士</div>
</div>
<!-- column headers -->
<div class="abs" style="left:0;top:274px;width:1387px;height:23px;background:#f0f0f0"></div>
<div class="abs" style="left:514px;top:274px;width:80px;height:22px;background:#d2d2d2"></div>
<div class="ch" style="left:35px;width:67px;color:#262626">A</div>
<div class="ch" style="left:103px;width:49px;color:#262626">B</div>
<div class="ch" style="left:153px;width:85px;color:#262626">C</div>
<div class="ch" style="left:239px;width:144px;color:#262626">D</div>
<div class="ch" style="left:384px;width:49px;color:#262626">E</div>
<div class="ch" style="left:434px;width:79px;color:#262626">F</div>
<div class="ch" style="left:514px;width:79px;color:#185c37">G</div>
<div class="ch" style="left:594px;width:79px;color:#262626">H</div>
<div class="ch" style="left:674px;width:79px;color:#262626">I</div>
<div class="ch" style="left:754px;width:79px;color:#262626">J</div>
<div class="ch" style="left:834px;width:79px;color:#262626">K</div>
<div class="ch" style="left:914px;width:79px;color:#262626">L</div>
<div class="ch" style="left:994px;width:79px;color:#262626">M</div>
<div class="ch" style="left:1074px;width:79px;color:#262626">N</div>
<div class="ch" style="left:1154px;width:79px;color:#262626">O</div>
<div class="ch" style="left:1234px;width:79px;color:#262626">P</div>
<div class="ch" style="left:1314px;width:79px;color:#262626">Q</div>
<svg style="left:0;top:274px" width="1387" height="24" viewBox="0 0 1387 24">
<path d="M34.5 0V23M102.5 0V23M152.5 0V23M238.5 0V23M383.5 0V23M433.5 0V23M513.5 0V23M593.5 0V23M673.5 0V23M753.5 0V23M833.5 0V23M913.5 0V23M993.5 0V23M1073.5 0V23M1153.5 0V23M1233.5 0V23M1313.5 0V23" stroke="#b5b5b5" stroke-width="1" fill="none"/>
<path d="M1 22.5H1387" stroke="#9a9a9a" stroke-width="1" fill="none"/>
<path d="M514 22H594" stroke="#107c41" stroke-width="2" fill="none"/>
<path d="M30.800 4.700V18.400H16.700z" fill="#b4b4b4"/>
</svg>
<!-- row headers -->
<div class="abs" style="left:0;top:297px;width:35px;height:499px;background:#f0f0f0;overflow:hidden">
<div class="rh" style="top:2px">1</div>
<div class="rh" style="top:25px">2</div>
<div class="rh" style="top:48px">3</div>
<div class="rh" style="top:71px">4</div>
<div class="rh" style="top:94px">5</div>
<div class="rh" style="top:117px">6</div>
<div class="rh" style="top:140px">7</div>
<div class="rh" style="top:163px">8</div>
<div class="rh" style="top:186px">9</div>
<div class="rh" style="top:209px">10</div>
<div class="rh" style="top:232px">11</div>
<div class="rh" style="top:255px">12</div>
<div class="rh" style="top:278px">13</div>
<div class="rh" style="top:301px">14</div>
<div class="rh" style="top:324px">15</div>
<div class="rh" style="top:347px">16</div>
<div class="rh" style="top:370px">17</div>
<div class="rh" style="top:393px">18</div>
<div class="rh" style="top:416px">19</div>
<div class="rh" style="top:439px">20</div>
<div class="rh" style="top:462px">21</div>
<div class="rh" style="top:485px">22</div>
<svg style="left:0;top:0" width="35" height="499" viewBox="0 0 35 499">
<path d="M1 22.5H35M1 45.5H35M1 68.5H35M1 91.5H35M1 114.5H35M1 137.5H35M1 160.5H35M1 183.5H35M1 206.5H35M1 229.5H35M1 252.5H35M1 275.5H35M1 298.5H35M1 321.5H35M1 344.5H35M1 367.5H35M1 390.5H35M1 413.5H35M1 436.5H35M1 459.5H35M1 482.5H35" stroke="#c3c3c3" stroke-width="1" fill="none"/>
<path d="M34.5 0V499" stroke="#9a9a9a" stroke-width="1" fill="none"/>
</svg></div>
<!-- ================= VERTICAL SCROLLBAR ================= -->
<div class="abs" style="left:1389px;top:274px;width:22px;height:522px;border-radius:11px;background:#f8f8f8"></div>
<div class="abs" style="left:1394.700px;top:295px;width:11px;height:459.500px;border-radius:5.500px;background:#757575"></div>
<svg class="abs" style="left:1389px;top:276px" width="22" height="521" viewBox="0 0 22 521"><path d="M6 12.400l5.400-7.400 5.400 7.400z" fill="#757575" stroke="#757575" stroke-width="1" stroke-linejoin="round"/><path d="M6 509.400l5.400 7.400 5.400-7.400z" fill="#757575" stroke="#757575" stroke-width="1" stroke-linejoin="round"/></svg>
<!-- ================= SHEET TABS ================= -->
<div class="abs" style="left:0;top:796px;width:1414px;height:40px;background:#f0f0f0"></div>
<div class="abs" style="left:142px;top:796px;width:90px;height:35px;background:#fff;border-radius:0 0 6px 6px;box-shadow:0 1px 2px rgba(0,0,0,.12)"></div>
<div class="t" style="left:152px;top:804px;font-size:17.6px;line-height:18px;color:#222">基本信息</div>
<div class="abs" style="left:152px;top:825px;width:70px;height:2px;background:#107c41"></div>
<div class="t" style="left:254px;top:807px;font-size:18px;line-height:19px;color:#222">Sheet1</div>
<div class="abs" style="left:237px;top:805px;width:1px;height:23px;background:#d0d0d0"></div>
<div class="abs" style="left:328px;top:805px;width:1px;height:23px;background:#d0d0d0"></div>
<svg class="abs" style="left:0;top:797px" width="1414" height="40" viewBox="0 0 1414 40" fill="none" stroke-linecap="round" stroke-linejoin="round">
 <path d="M40 12l-6 6.400 6 6.400" stroke="#a8a8a8" stroke-width="1.700"/>
 <path d="M74 12l6 6.400-6 6.400" stroke="#a8a8a8" stroke-width="1.700"/>
 <path d="M381 18.4h14M388 11.4v14" stroke="#333" stroke-width="1.4"/>
 <g fill="#444" stroke="none"><rect x="851.6" y="13" width="2.2" height="2.2"/><rect x="851.6" y="17.4" width="2.2" height="2.2"/><rect x="851.6" y="21.8" width="2.2" height="2.2"/></g>
</svg>
<div class="abs" style="left:873px;top:806px;width:517px;height:22px;border-radius:11px;background:#f8f8f8"></div>
<div class="abs" style="left:894px;top:810px;width:445px;height:11px;border-radius:5.5px;background:#757575"></div>
<svg class="abs" style="left:873px;top:806px" width="517" height="22" viewBox="0 0 517 22"><path d="M14.6 5.6l-7 5.4 7 5.4z" fill="#757575" stroke="#757575" stroke-width="1" stroke-linejoin="round"/><path d="M502.4 5.6l7 5.4-7 5.4z" fill="#757575" stroke="#757575" stroke-width="1" stroke-linejoin="round"/></svg>
<!-- ================= STATUS BAR ================= -->
<div class="abs" style="left:0;top:836px;width:1414px;height:28px;background:#f4f4f4;border-top:1px solid #d2d0d0"></div>
<div class="abs" style="left:1019px;top:837px;width:50px;height:26px;background:#dcdcdc"></div>
<div class="t" style="left:15.500px;top:842px;font-size:14.8px;line-height:16px;color:#333">就绪</div>
<div class="t" style="left:132px;top:842px;font-size:14.8px;line-height:16px;color:#333;font-weight:700">辅助功能: 调查</div>
<div class="t" style="left:1349px;top:842px;font-size:16px;line-height:17px;color:#333">100%</div>
<svg class="abs" style="left:0;top:837px" width="1414" height="27" viewBox="0 0 1414 27" fill="none" stroke="#3b3b3b" stroke-width="1.2" stroke-linecap="round" stroke-linejoin="round">
 <g stroke="#444" fill="none">
 <path d="M70.400 6.800h17.200" stroke-width="2.200" stroke-linecap="butt"/>
 <path d="M73.400 10.600h14.200" stroke-width="1.100" stroke-linecap="butt"/>
 <path d="M71.100 7v13.400h6.600" stroke-width="1.400" stroke-linecap="butt" stroke-linejoin="miter"/>
 <circle cx="81.800" cy="15.800" r="5" stroke-width="1.400"/><circle cx="81.800" cy="15.800" r="2.300" fill="#444" stroke="none"/>
 <circle cx="117.600" cy="7.600" r="2.200" stroke-width="1.400"/>
 <path d="M110.600 10.800c2.400 1.600 4.200 2 4.800 2.400v3.400c-.4 2-1.800 3.800-3.800 5.400M124.800 10.800c-2.400 1.600-4.200 2-4.800 2.400h-4.600M120 13.200v2" stroke-width="1.500"/>
 <path d="M120.200 14.800l7 7.200M127.200 14.800l-7 7.200" stroke-width="1.400"/>
 </g>
 <!-- view icons -->
 <g stroke="#333" stroke-width="1.1"><rect x="1036.5" y="5.5" width="15" height="15"/><path d="M1041.5 5.5v15M1046.5 5.5v15M1036.5 10.5h15M1036.5 15.5h15"/></g>
 <g stroke="#333" stroke-width="1.1"><rect x="1086.5" y="5.5" width="15" height="15" rx="1"/><rect x="1090" y="9" width="8" height="8"/><path d="M1092 11.4h4M1092 13.2h4M1092 15h4" stroke-width=".8"/></g>
 <g stroke="#333" stroke-width="1.1"><path d="M1136.500 5.5h15v15h-15zM1141.5 5.500v8h5.4v-8M1136.5 13.5h15"/></g>
 <path d="M1176 13.500h9" stroke="#333"/>
 <path d="M1192 13.5h125" stroke="#5c5c5c" stroke-width="1"/>
 <rect x="1252.600" y="7" width="5" height="13" rx="1" fill="#5e5e5e" stroke="none"/>
 <path d="M1323 13.5h9M1327.500 9v9" stroke="#333"/>
</svg>
<!-- window border -->
<div class="abs" style="left:0;top:61px;width:1px;height:803px;background:#107c41"></div>
<div class="abs" style="left:1413px;top:61px;width:1px;height:803px;background:#107c41"></div><div class="abs" style="left:1412px;top:61px;width:1px;height:802px;background:rgba(16,124,65,.3)"></div>
<div class="abs" style="left:0;top:863px;width:1414px;height:1px;background:#107c41"></div>
</body>
</html>
